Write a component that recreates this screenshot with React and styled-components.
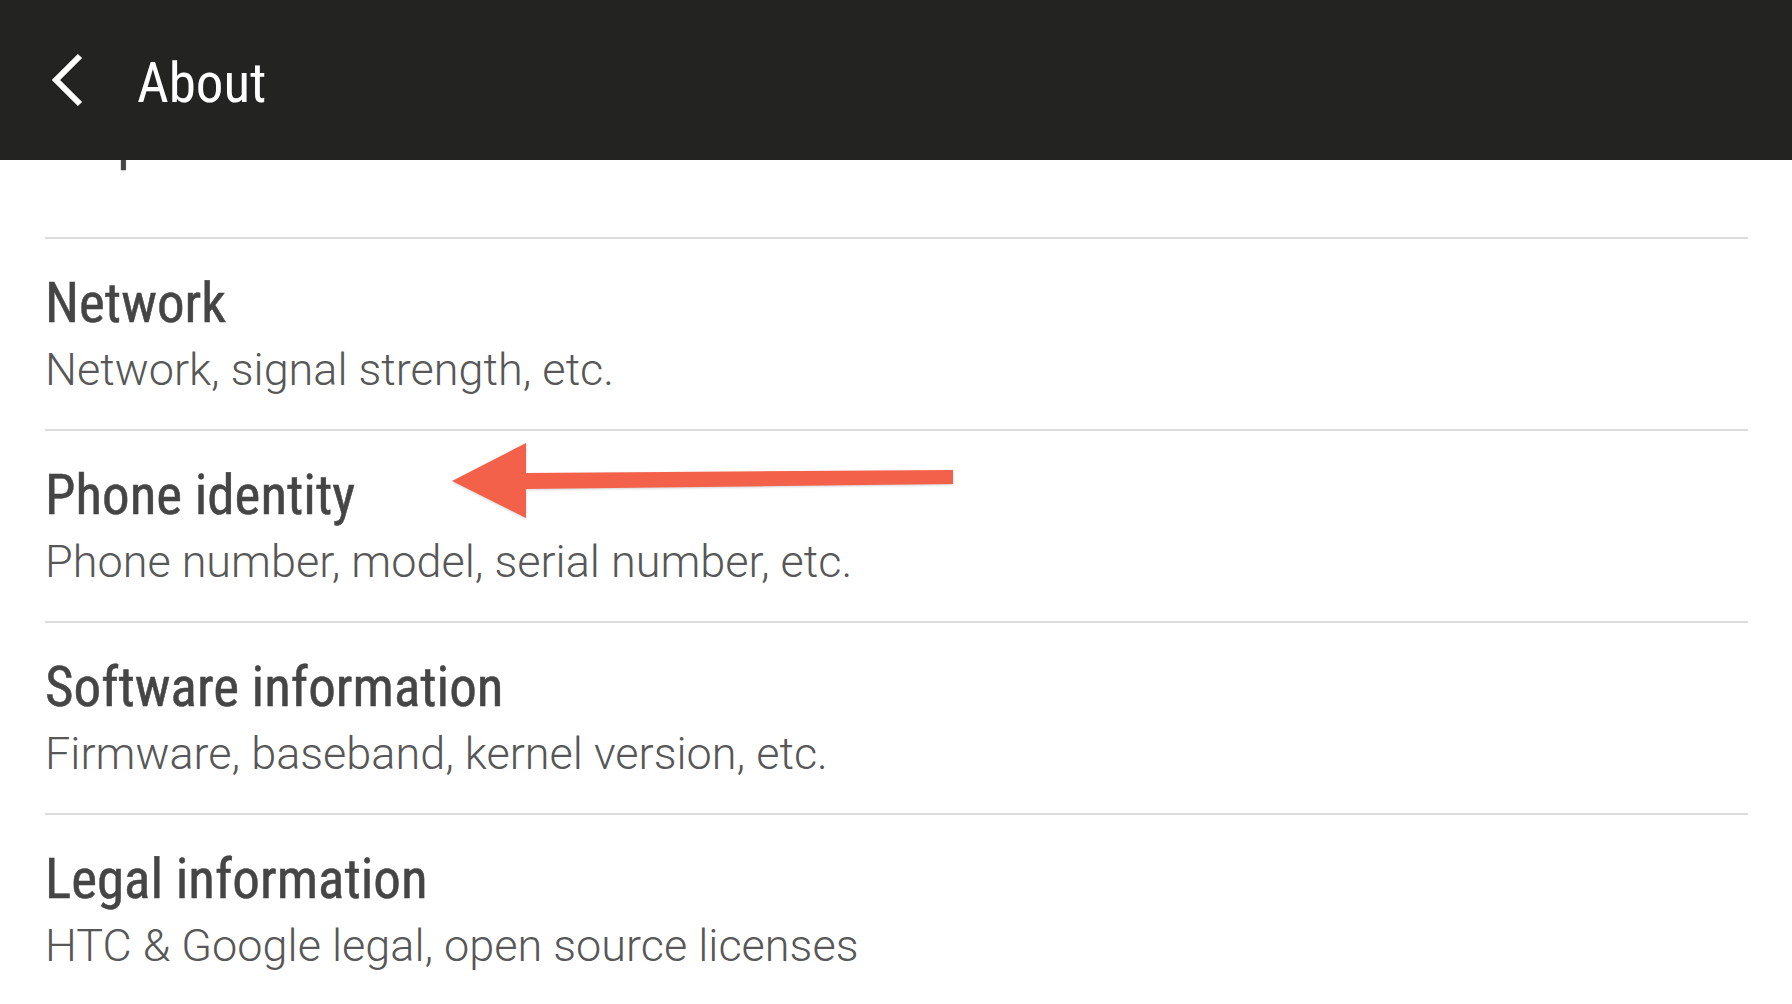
import styled, { createGlobalStyle } from "styled-components";
import { useLayoutEffect, useRef } from "react";

const GlobalStyle = createGlobalStyle`
    html, body {
        margin: 0;
        padding: 0;
        background: #ffffff;
    }
    * {
        box-sizing: border-box;
    }
`;

const items = [
    { titulo: "Help" },
    { titulo: "Network", detalle: "Network, signal strength, etc." },
    { titulo: "Phone identity", detalle: "Phone number, model, serial number, etc." },
    { titulo: "Software information", detalle: "Firmware, baseband, kernel version, etc." },
    { titulo: "Legal information", detalle: "HTC & Google legal, open source licenses" },
];

function App() {
    const listaRef = useRef(null);

    // la lista ya está desplazada: solo asoma el final de "Help"
    useLayoutEffect(() => {
        if (listaRef.current) listaRef.current.scrollTop = 113;
    }, []);

    return (
        <>
            <GlobalStyle />
            <Pantalla>
                <Cabecera>
                    <BotonAtras aria-label="Back">
                        <svg width="48" height="64" viewBox="0 0 48 64">
                            <polyline
                                points="36,8 12,32 36,56"
                                fill="none"
                                stroke="#ffffff"
                                strokeWidth="6"
                                strokeLinejoin="miter"
                            />
                        </svg>
                    </BotonAtras>
                    <TituloCabecera>About</TituloCabecera>
                </Cabecera>
                <Lista ref={listaRef}>
                    {items.map((item) => (
                        <Fila key={item.titulo} $simple={!item.detalle}>
                            <Titulo>{item.titulo}</Titulo>
                            {item.detalle && <Detalle>{item.detalle}</Detalle>}
                        </Fila>
                    ))}
                </Lista>
                <Flecha width="520" height="95" viewBox="0 0 520 95">
                    <polygon
                        points="12,46 86,8 86,38 513,35 513,49 86,54 86,83"
                        fill="#f4614b"
                    />
                </Flecha>
            </Pantalla>
        </>
    );
}

const Pantalla = styled.div`
    position: relative;
    height: 100vh;
    display: flex;
    flex-direction: column;
    overflow: hidden;
    background: #ffffff;
`;

const Cabecera = styled.header`
    flex: 0 0 160px;
    display: flex;
    align-items: center;
    gap: 45px;
    padding-left: 44px;
    background-color: #232422;
`;

const BotonAtras = styled.div`
    display: flex;
    width: 48px;
    height: 64px;
`;

const TituloCabecera = styled.h1`
    margin: 6px 0 0 0;
    font-family: "Liberation Sans Narrow", "Roboto Condensed", "DejaVu Sans Condensed", "Liberation Sans", sans-serif;
    font-stretch: condensed;
    font-weight: 400;
    font-size: 55px;
    line-height: 64px;
    color: #ffffff;
`;

const Lista = styled.div`
    flex: 1;
    overflow: hidden;
    padding: 0 44px 0 45px;
`;

const Fila = styled.div`
    display: flex;
    flex-direction: column;
    height: 192px;
    padding-top: ${(p) => (p.$simple ? "61px" : "32px")};
    border-bottom: 2px solid #dcdcdc;
`;

const Titulo = styled.div`
    font-family: "Liberation Sans Narrow", "Roboto Condensed", "DejaVu Sans Condensed", "Liberation Sans", sans-serif;
    font-stretch: condensed;
    font-weight: 400;
    font-size: 55px;
    line-height: 64px;
    color: #454545;
    -webkit-text-stroke: 0.5px #454545;
`;

const Detalle = styled.div`
    font-family: Roboto, "Liberation Sans", sans-serif;
    font-weight: 300;
    font-size: 45px;
    line-height: 70px;
    color: #575757;
`;

const Flecha = styled.svg`
    position: absolute;
    left: 440px;
    top: 435px;
    filter: drop-shadow(0 1px 1px rgba(0, 0, 0, 0.18));
`;

export default App;
